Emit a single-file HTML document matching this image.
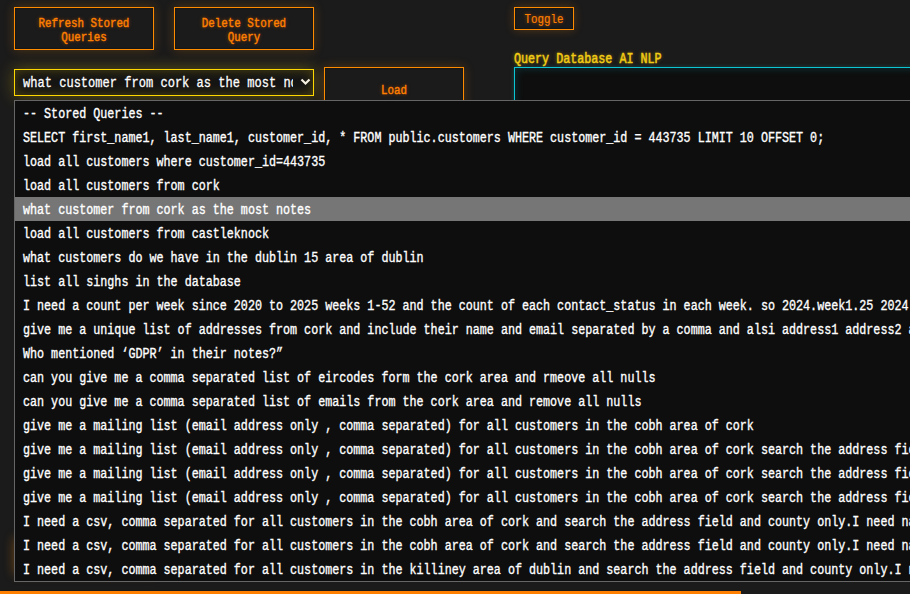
<!DOCTYPE html>
<html>
<head>
<meta charset="utf-8">
<style>
html,body{margin:0;padding:0;}
body{width:910px;height:594px;overflow:hidden;background:#1b1b1b;position:relative;font-family:"Liberation Mono",monospace;}
.abs{position:absolute;box-sizing:border-box;}
.btn{border:1px solid #ff8c00;box-shadow:0 0 10px rgba(255,140,0,0.25), inset 0 0 2px rgba(0,0,0,0.6);color:#ff8000;font-weight:normal;-webkit-text-stroke:0.4px #ff8000;text-shadow:0 0 4px rgba(255,110,0,0.6);}
.bt{position:absolute;left:0;white-space:pre;font-size:12px;line-height:14px;transform-origin:0 0;transform:scaleX(0.9);text-align:center;}
.t{position:absolute;white-space:pre;transform-origin:0 0;transform:scaleX(0.8365);font-size:14px;line-height:24px;}
#dd{left:14px;top:100px;width:1000px;height:482px;background:#0e0e0e;border:1px solid #666;overflow:hidden;}
.row{position:absolute;left:0;width:1000px;height:24px;color:#fff;-webkit-text-stroke:0.35px #fff;}
.row .t{left:8px;top:1.3px;}
.hl{background:#767676;}
.lbl{color:#f2cc14;text-shadow:0 0 4px rgba(242,204,20,0.6);}
.ta{border:1px solid #0bc4d4;background:#0e0e0e;box-shadow:0 0 4px rgba(11,196,212,0.25), inset 0 0 8px rgba(11,196,212,0.22);}
.sel{border:1px solid #ffd700;background:#141414;color:#fff;-webkit-text-stroke:0.3px #fff;box-shadow:0 0 16px rgba(255,215,0,0.3), inset 0 0 12px rgba(255,215,0,0.25);}
</style>
</head>
<body>


<div class="abs btn" style="left:14px;top:7px;width:140px;height:43px;"><div class="bt" style="width:153.3px;top:9px;">Refresh Stored
Queries</div></div>
<div class="abs btn" style="left:174px;top:7px;width:140px;height:43px;"><div class="bt" style="width:153.3px;top:9px;">Delete Stored
Query</div></div>
<div class="abs btn" style="left:514px;top:7px;width:60px;height:23px;"><div class="bt" style="width:64.4px;top:5px;-webkit-text-stroke:0.15px #ff8000;">Toggle</div></div>
<div class="abs btn" style="left:324px;top:67px;width:140px;height:60px;"><div class="bt" style="width:153.3px;top:16px;">Load</div></div>
<div class="abs lbl" style="left:514px;top:47px;"><span class="t" style="-webkit-text-stroke:0.5px #f2cc14;">Query Database AI NLP</span></div>
<div class="abs ta" style="left:514px;top:67px;width:500px;height:100px;"></div>
<div class="abs sel" style="left:14px;top:69px;width:300px;height:27px;"><div style="position:absolute;left:0;top:0;width:278px;height:25px;overflow:hidden;"><span class="t" style="left:8px;top:2px;font-size:15px;transform:scaleX(0.8035);">what customer from cork as the most notes</span></div><svg style="position:absolute;left:284.5px;top:8px" width="12" height="10" viewBox="0 0 12 10"><path d="M1.5 1.5 L5.5 5.5 L9.5 1.5" stroke="#f5f0e0" stroke-width="2.2" fill="none"/></svg></div>

<div class="abs" style="left:14px;top:538px;width:140px;height:36px;border:1px solid #ff8c00;box-shadow:0 0 10px rgba(255,140,0,0.35);"></div>
<div id="dd" class="abs">
<div class="row" style="top:0px"><span class="t">-- Stored Queries --</span></div>
<div class="row" style="top:24px"><span class="t">SELECT first_name1, last_name1, customer_id, * FROM public.customers WHERE customer_id = 443735 LIMIT 10 OFFSET 0;</span></div>
<div class="row" style="top:48px"><span class="t">load all customers where customer_id=443735</span></div>
<div class="row" style="top:72px"><span class="t">load all customers from cork</span></div>
<div class="row hl" style="top:96px"><span class="t">what customer from cork as the most notes</span></div>
<div class="row" style="top:120px"><span class="t">load all customers from castleknock</span></div>
<div class="row" style="top:144px"><span class="t">what customers do we have in the dublin 15 area of dublin</span></div>
<div class="row" style="top:168px"><span class="t">list all singhs in the database</span></div>
<div class="row" style="top:192px"><span class="t">I need a count per week since 2020 to 2025 weeks 1-52 and the count of each contact_status in each week. so 2024.week1.25 2024.week2.30</span></div>
<div class="row" style="top:216px"><span class="t">give me a unique list of addresses from cork and include their name and email separated by a comma and alsi address1 address2 address3</span></div>
<div class="row" style="top:240px"><span class="t">Who mentioned ‘GDPR’ in their notes?”</span></div>
<div class="row" style="top:264px"><span class="t">can you give me a comma separated list of eircodes form the cork area and rmeove all nulls</span></div>
<div class="row" style="top:288px"><span class="t">can you give me a comma separated list of emails from the cork area and remove all nulls</span></div>
<div class="row" style="top:312px"><span class="t">give me a mailing list (email address only , comma separated) for all customers in the cobh area of cork</span></div>
<div class="row" style="top:336px"><span class="t">give me a mailing list (email address only , comma separated) for all customers in the cobh area of cork search the address field</span></div>
<div class="row" style="top:360px"><span class="t">give me a mailing list (email address only , comma separated) for all customers in the cobh area of cork search the address field</span></div>
<div class="row" style="top:384px"><span class="t">give me a mailing list (email address only , comma separated) for all customers in the cobh area of cork search the address field</span></div>
<div class="row" style="top:408px"><span class="t">I need a csv, comma separated for all customers in the cobh area of cork and search the address field and county only.I need name</span></div>
<div class="row" style="top:432px"><span class="t">I need a csv, comma separated for all customers in the cobh area of cork and search the address field and county only.I need name</span></div>
<div class="row" style="top:456px"><span class="t">I need a csv, comma separated for all customers in the killiney area of dublin and search the address field and county only.I need</span></div>
</div>

<div class="abs" style="left:0;top:591px;width:741px;height:3px;background:#ff8000;"></div>
</body>
</html>
